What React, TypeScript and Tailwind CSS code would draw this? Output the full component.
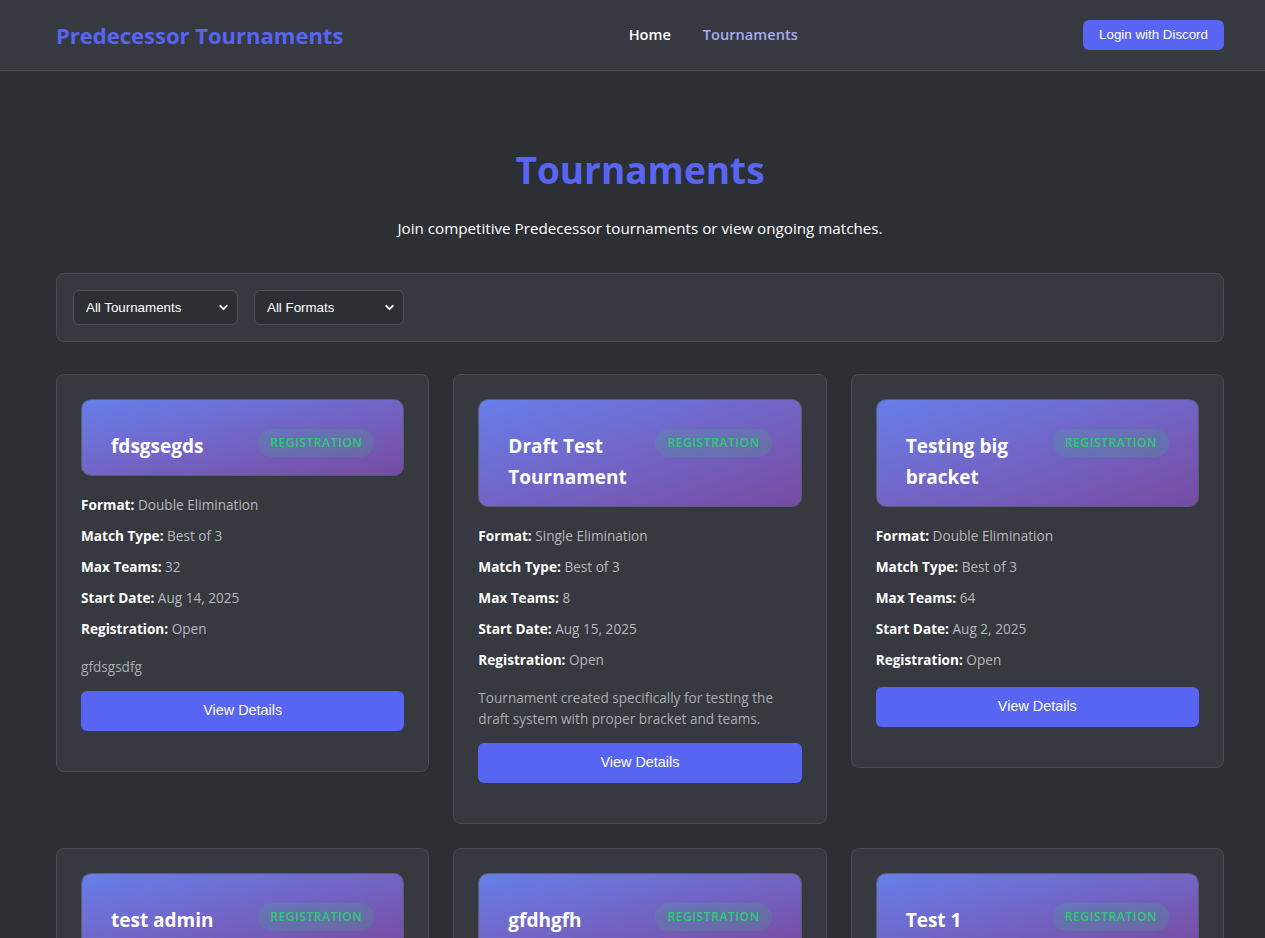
import React from 'react';
import { ChevronDown } from 'lucide-react';

type Tournament = {
  name: string;
  format: string;
  matchType: string;
  maxTeams: number;
  startDate: string;
  registration: string;
  description?: string;
};

const tournaments: Tournament[] = [
  { name: 'fdsgsegds', format: 'Double Elimination', matchType: 'Best of 3', maxTeams: 32, startDate: 'Aug 14, 2025', registration: 'Open', description: 'gfdsgsdfg' },
  { name: 'Draft Test Tournament', format: 'Single Elimination', matchType: 'Best of 3', maxTeams: 8, startDate: 'Aug 15, 2025', registration: 'Open', description: 'Tournament created specifically for testing the draft system with proper bracket and teams.' },
  { name: 'Testing big bracket', format: 'Double Elimination', matchType: 'Best of 3', maxTeams: 64, startDate: 'Aug 2, 2025', registration: 'Open' },
  { name: 'test admin', format: 'Single Elimination', matchType: 'Best of 1', maxTeams: 16, startDate: 'Jul 30, 2025', registration: 'Open', description: 'test' },
  { name: 'gfdhgfh', format: 'Double Elimination', matchType: 'Best of 3', maxTeams: 16, startDate: 'Jul 28, 2025', registration: 'Open', description: 'hgfhgf' },
  { name: 'Test 1', format: 'Single Elimination', matchType: 'Best of 3', maxTeams: 8, startDate: 'Jul 25, 2025', registration: 'Open' },
];

const Select = ({ label, width }: { label: string; width: string }) => (
  <div className={`relative ${width}`}>
    <select className="w-full h-[35px] appearance-none rounded-md border border-[#4f525a] bg-[#2c2f33] pl-3 pr-8 text-[13.33px] text-white [font-family:'Liberation_Sans',Arial,sans-serif] outline-none">
      <option>{label}</option>
    </select>
    <ChevronDown className="pointer-events-none absolute right-[8px] top-[11px] h-[13px] w-[13px] text-white" strokeWidth={3.5} />
  </div>
);

const Row = ({ label, value }: { label: string; value: string | number }) => (
  <p className="text-[13.6px] leading-[21px]">
    <span className="font-bold text-white">{label}:</span>{' '}
    <span className="text-[#b5b8bd]">{value}</span>
  </p>
);

const TournamentCard = ({ t }: { t: Tournament }) => (
  <div className="rounded-lg border border-[#4a4d55] bg-[#36393f] px-6 pt-6 pb-10">
    {/* gradient header */}
    <div className="flex items-start justify-between gap-4 rounded-[10px] border border-[#5a5d70] bg-gradient-to-br from-[#667eea] to-[#764ba2] px-[29px] pt-[29px] pb-[13px]">
      <h3 className="mt-[2px] text-[19px] font-bold leading-[31px] text-white">{t.name}</h3>
      <span className="shrink-0 rounded-full bg-[rgba(46,204,113,0.17)] px-3 text-[12px] font-semibold leading-[28px] tracking-[0.6px] text-[#2ecc71]">
        REGISTRATION
      </span>
    </div>

    <div className="mt-[18px] flex flex-col gap-[10px]">
      <Row label="Format" value={t.format} />
      <Row label="Match Type" value={t.matchType} />
      <Row label="Max Teams" value={t.maxTeams} />
      <Row label="Start Date" value={t.startDate} />
      <Row label="Registration" value={t.registration} />
    </div>

    {t.description && (
      <p className="mt-[17px] text-[13.6px] leading-[21px] text-[#a9acb2]">{t.description}</p>
    )}

    <button className={`${t.description ? 'mt-[14px]' : 'mt-[17px]'} h-10 w-full rounded-md bg-[#5865f2] text-[14.4px] text-white [font-family:'Liberation_Sans',Arial,sans-serif]`}>
      View Details
    </button>
  </div>
);

export default function App() {
  return (
    <div className="min-h-screen bg-[#2c2f33] [font-family:'Open_Sans',sans-serif]">
      <header className="h-[71px] border-b border-[#4a4d55] bg-[#36393f]">
        <div className="ml-[56px] flex h-full w-[1168px] items-center justify-between">
          <span className="text-[22px] font-bold text-[#5865f2]">Predecessor Tournaments</span>
          <nav className="flex items-center gap-8 text-[14.6px] font-semibold">
            <a className="text-white">Home</a>
            <a className="text-[#a7abf3]">Tournaments</a>
          </nav>
          <button className="h-[30px] rounded-md bg-[#5865f2] px-4 text-[13.33px] text-white [font-family:'Liberation_Sans',Arial,sans-serif]">
            Login with Discord
          </button>
        </div>
      </header>

      <main className="ml-[56px] w-[1168px] pt-[75px] pb-10">
        <h1 className="text-center text-[37px] font-bold leading-[48px] text-[#5865f2]">Tournaments</h1>
        <p className="mt-[22px] text-center text-[15.2px] leading-[24px] text-white">
          Join competitive Predecessor tournaments or view ongoing matches.
        </p>

        <div className="mt-[33px] flex gap-4 rounded-lg border border-[#4a4d55] bg-[#36393f] p-4">
          <Select label="All Tournaments" width="w-[165px]" />
          <Select label="All Formats" width="w-[150px]" />
        </div>

        <div className="mt-8 grid grid-cols-3 items-start gap-6">
          {tournaments.map((t) => (
            <TournamentCard key={t.name} t={t} />
          ))}
        </div>
      </main>
    </div>
  );
}
